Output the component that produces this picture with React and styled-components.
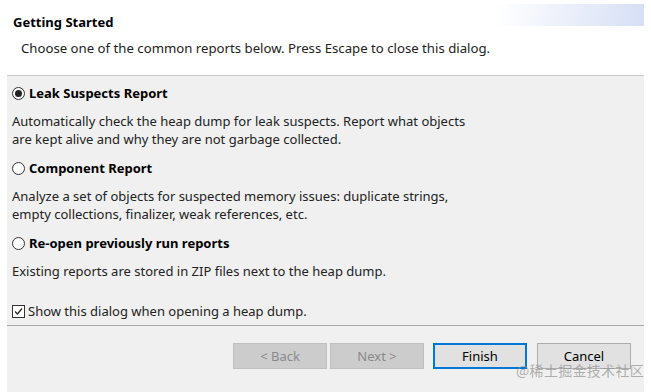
import React from 'react';
import styled, { createGlobalStyle } from 'styled-components';

const GlobalStyle = createGlobalStyle`
  html, body {
    margin: 0;
    padding: 0;
    background: #ffffff;
  }
  body {
    font-family: 'Noto Sans', 'Open Sans', sans-serif;
    color: #1a1a1a;
  }
`;

// okvir cijele slike
const Page = styled.div`
  width: 651px;
  height: 392px;
  padding: 0 7px;
  box-sizing: border-box;
  position: relative;
  overflow: hidden;
`;

const Dialog = styled.div`
  display: flex;
  flex-direction: column;
  height: 100%;
`;

// bijeli naslovni dio s plavim prijelazom desno
const Header = styled.header`
  height: 76px;
  box-sizing: border-box;
  padding: 12px 0 0 6px;
  background:
    linear-gradient(100deg, rgba(255,255,255,1) 0%, rgba(236,240,250,1) 45%, rgba(214,223,244,1) 100%)
      no-repeat right 0 top 4px / 146px 22px,
    #ffffff;
  border-bottom: 1px solid #c9c9c9;
  box-shadow: 0 1px 0 #e6e6e6;
`;

const Title = styled.h1`
  margin: 0;
  font-size: 13px;
  font-weight: 700;
  line-height: 20px;
  color: #000;
`;

const Subtitle = styled.p`
  margin: 6px 0 0 8px;
  font-size: 13.2px;
  line-height: 20px;
  color: #222;
`;

const Body = styled.main`
  flex: 1;
  background: #f0f0f0;
  padding: 6px 0 0 5px;
  border-bottom: 1px solid #a8a8a8;
  box-shadow: 0 1px 0 #fafafa;
`;

const Option = styled.label`
  display: flex;
  align-items: center;
  gap: 4px;
  height: 20px;
  margin: ${(p) => (p.$first ? '1px 0 9px' : '10px 0 9px')};
  font-size: 13px;
  font-weight: 700;
  color: #000;
`;

const Radio = styled.span`
  width: 11px;
  height: 11px;
  border: 1px solid #333;
  border-radius: 50%;
  background: #fff;
  display: flex;
  align-items: center;
  justify-content: center;

  &::after {
    content: '';
    width: 7px;
    height: 7px;
    border-radius: 50%;
    background: ${(p) => (p.$checked ? '#222' : 'transparent')};
  }
`;

const Description = styled.p`
  margin: 0;
  font-size: 13px;
  line-height: 18px;
  color: #222;
`;

const CheckRow = styled.label`
  display: flex;
  align-items: center;
  gap: 3px;
  margin-top: 21px;
  height: 20px;
  font-size: 13px;
  color: #222;
`;

const CheckBox = styled.span`
  width: 11px;
  height: 11px;
  border: 1px solid #333;
  background: #fff;
  display: flex;
  align-items: center;
  justify-content: center;
`;

// donja traka s gumbima
const ButtonBar = styled.footer`
  height: 66px;
  box-sizing: border-box;
  background: #f0f0f0;
  display: flex;
  align-items: flex-start;
  justify-content: flex-end;
  padding: 17px 13px 0 0;
`;

const ButtonGroup = styled.div`
  display: flex;
  gap: ${(p) => p.$gap}px;
  margin-left: ${(p) => p.$offset || 0}px;
`;

const Button = styled.button`
  width: 94px;
  height: 26px;
  box-sizing: border-box;
  font-family: inherit;
  font-size: 13px;
  padding: 0;
  background: ${(p) => (p.disabled ? '#cccccc' : '#e1e1e1')};
  color: ${(p) => (p.disabled ? '#8a8a8a' : '#000')};
  border: ${(p) => (p.$primary ? '2px solid #0078d7' : p.disabled ? '1px solid #bfbfbf' : '1px solid #adadad')};
`;

const Watermark = styled.span`
  position: absolute;
  right: 7px;
  bottom: 12px;
  font-size: 14px;
  color: rgba(150, 150, 150, 0.75);
  font-family: 'Noto Sans CJK SC', sans-serif;
  letter-spacing: 0.3px;
`;

const reports = [
  {
    id: 'leak',
    title: 'Leak Suspects Report',
    lines: [
      'Automatically check the heap dump for leak suspects. Report what objects',
      'are kept alive and why they are not garbage collected.',
    ],
    checked: true,
  },
  {
    id: 'component',
    title: 'Component Report',
    lines: [
      'Analyze a set of objects for suspected memory issues: duplicate strings,',
      'empty collections, finalizer, weak references, etc.',
    ],
  },
  {
    id: 'reopen',
    title: 'Re-open previously run reports',
    lines: ['Existing reports are stored in ZIP files next to the heap dump.'],
  },
];

const App = () => {
  return (
    <>
      <GlobalStyle />
      <Page>
        <Dialog>
          <Header>
            <Title>Getting Started</Title>
            <Subtitle>Choose one of the common reports below. Press Escape to close this dialog.</Subtitle>
          </Header>
          <Body>
            {reports.map((r, i) => (
              <div key={r.id}>
                <Option $first={i === 0}>
                  <Radio $checked={r.checked} />
                  {r.title}
                </Option>
                {r.lines.map((l) => (
                  <Description key={l}>{l}</Description>
                ))}
              </div>
            ))}
            <CheckRow>
              <CheckBox>
                <svg width="9" height="9" viewBox="0 0 9 9">
                  <path d="M1 4.5 L3.5 7 L8 1.5" fill="none" stroke="#222" strokeWidth="1.2" />
                </svg>
              </CheckBox>
              Show this dialog when opening a heap dump.
            </CheckRow>
          </Body>
          <ButtonBar>
            <ButtonGroup $gap={3}>
              <Button disabled>&lt; Back</Button>
              <Button disabled>Next &gt;</Button>
            </ButtonGroup>
            <ButtonGroup $gap={10} $offset={9}>
              <Button $primary>Finish</Button>
              <Button>Cancel</Button>
            </ButtonGroup>
          </ButtonBar>
        </Dialog>
        <Watermark>@稀土掘金技术社区</Watermark>
      </Page>
    </>
  );
};

export default App;
